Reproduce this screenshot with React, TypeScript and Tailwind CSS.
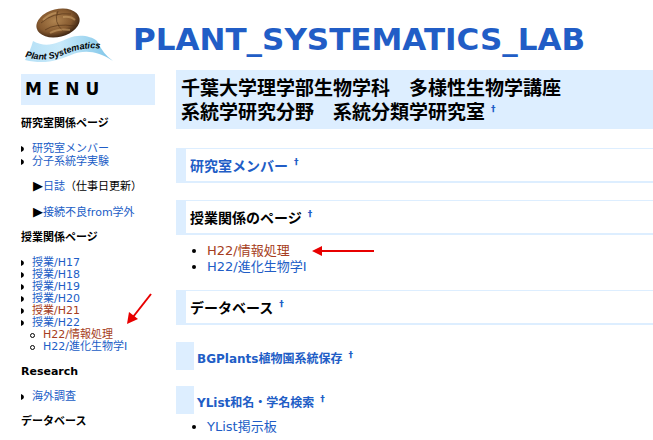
import type { ReactNode } from 'react';

const lessonYears = ['H17', 'H18', 'H19', 'H20', 'H21'];

function Anchor() {
  return (
    <a href="#top" className="ml-1.5 align-super text-[9px] leading-none font-bold text-[#215dc6]">
      †
    </a>
  );
}

function PageLink({ children, visited = false }: { children: ReactNode; visited?: boolean }) {
  return (
    <a href="#page" className={visited ? 'text-[#a63d21]' : 'text-[#215dc6]'}>
      {children}
    </a>
  );
}

function MenuHeading({ children }: { children: ReactNode }) {
  return <h5 className="text-[11px] leading-[14px] font-bold">{children}</h5>;
}

function MenuItem({ children }: { children: ReactNode }) {
  return (
    <li className="flex items-center">
      <svg width="3" height="6" viewBox="0 0 3 6" className="mr-2 shrink-0">
        <path d="M0 0 Q3 1 3 3 Q3 5 0 6Z" />
      </svg>
      <span>{children}</span>
    </li>
  );
}

function SectionHeading({ children }: { children: ReactNode }) {
  return (
    <h3 className="h-[35px] border-t border-b-2 border-l-10 border-[#ddeeff] pt-[5px] pl-1 text-[14px] leading-6 font-bold">
      {children}
      <Anchor />
    </h3>
  );
}

function SubHeading({ children }: { children: ReactNode }) {
  return (
    <h4 className="h-7 border-l-18 border-[#ddeeff] pt-[5px] pl-[3px] text-[12px] leading-6 font-bold">
      <PageLink>{children}</PageLink>
      <Anchor />
    </h4>
  );
}

function Logo() {
  return (
    <svg width="94" height="58" viewBox="0 0 94 58" role="img" aria-label="Plant Systematics">
      <defs>
        <radialGradient id="seed" cx="0.45" cy="0.4" r="0.65">
          <stop offset="0" stopColor="#b08450" />
          <stop offset="0.6" stopColor="#85592f" />
          <stop offset="1" stopColor="#2c180b" />
        </radialGradient>
        <linearGradient id="ribbon" x1="0" x2="1">
          <stop offset="0" stopColor="#b5e0f6" />
          <stop offset="0.4" stopColor="#c9eafa" />
          <stop offset="1" stopColor="#7cc4e8" />
        </linearGradient>
        <path id="wave" d="M4 49 C18 53 30 52 42 47 S66 38 90 42" />
      </defs>
      <ellipse cx="37" cy="15" rx="22" ry="14" transform="rotate(-14 37 15)" fill="url(#seed)" />
      <path d="M20 15 Q32 4 50 6 M37 3 Q32 14 42 23 M24 22 Q34 15 54 18" fill="none" stroke="#4f2e14" strokeWidth="1" opacity="0.6" />
      <path d="M22 12 Q28 6 35 5 M42 9 Q50 8 54 12 M29 25 Q38 20 49 22" fill="none" stroke="#d3aa70" strokeWidth="2" opacity="0.5" />
      <path d="M12 33 C26 41 38 34 48 30 S70 28 76 33 Q82 46 92 53 C76 42 62 42 50 47 S24 57 4 52 Q9 44 12 33Z" fill="url(#ribbon)" />
      <text className="font-['Liberation_Sans'] text-[9px] font-bold italic">
        <textPath href="#wave">Plant Systematics</textPath>
      </text>
    </svg>
  );
}

export default function App() {
  return (
    <div className="relative h-screen overflow-hidden bg-white font-['DejaVu_Sans','Noto_Sans_CJK_JP',sans-serif] text-black">
      <header className="flex h-[70px] items-start pt-2 pl-[21px]">
        <Logo />
        <h1 className="ml-[18px] pt-[13px] text-[31px] leading-9 font-bold whitespace-nowrap text-[#215dc6]">
          PLANT_SYSTEMATICS_LAB
        </h1>
      </header>

      <div className="flex items-start">
        <nav className="mt-1 ml-[21px] w-[134px] shrink-0 text-[11px] leading-3 whitespace-nowrap">
          <h2 className="mb-3 bg-[#ddeeff] pl-1 text-[17px] leading-[31px] font-bold">M E N U</h2>

          <MenuHeading>研究室関係ページ</MenuHeading>
          <ul className="mt-[11px] leading-[13px]">
            <MenuItem><PageLink>研究室メンバー</PageLink></MenuItem>
            <MenuItem><PageLink>分子系統学実験</PageLink></MenuItem>
          </ul>
          <p className="mt-[11px] ml-3 leading-[13px]"><span className="text-[13px]">▶</span><PageLink>日誌</PageLink>（仕事日更新）</p>
          <p className="mt-3 mb-3 ml-3 leading-[13px]"><span className="text-[13px]">▶</span><PageLink>接続不良from学外</PageLink></p>

          <MenuHeading>授業関係ページ</MenuHeading>
          <ul className="my-3">
            {lessonYears.map((year) => (
              <MenuItem key={year}>
                <PageLink visited={year === 'H21'}>授業/{year}</PageLink>
              </MenuItem>
            ))}
            <MenuItem><PageLink>授業/H22</PageLink></MenuItem>
            <li>
              <ul className="ml-[9px]">
                <li className="flex items-center gap-2">
                  <span className="size-[5px] rounded-full border border-black" />
                  <PageLink visited>H22/情報処理</PageLink>
                </li>
                <li className="flex items-center gap-2">
                  <span className="size-[5px] rounded-full border border-black" />
                  <PageLink>H22/進化生物学I</PageLink>
                </li>
              </ul>
            </li>
          </ul>

          <MenuHeading>Research</MenuHeading>
          <ul className="my-3">
            <MenuItem><PageLink>海外調査</PageLink></MenuItem>
          </ul>
          <MenuHeading>データベース</MenuHeading>
          <ul className="mt-3">
            <MenuItem><PageLink>BGPlants植物園系統保存</PageLink></MenuItem>
          </ul>
        </nav>

        <main className="ml-[21px] min-w-0 flex-1 whitespace-nowrap">
          <h2 className="bg-[#ddeeff] px-[5px] pt-1.5 pb-[5px] text-[19px] leading-6 font-bold">
            千葉大学理学部生物学科　多様性生物学講座
            <br />
            系統学研究分野　系統分類学研究室
            <Anchor />
          </h2>

          <div className="mt-[19px]">
            <SectionHeading><PageLink>研究室メンバー</PageLink></SectionHeading>
          </div>
          <div className="mt-[17px]">
            <SectionHeading>授業関係のページ</SectionHeading>
          </div>
          <ul className="mt-2 mb-[15px] list-disc pl-[31px] text-[13px] leading-4">
            <li><PageLink visited>H22/情報処理</PageLink></li>
            <li><PageLink>H22/進化生物学I</PageLink></li>
          </ul>
          <SectionHeading>データベース</SectionHeading>
          <div className="mt-[17px]">
            <SubHeading>BGPlants植物園系統保存</SubHeading>
          </div>
          <div className="mt-4">
            <SubHeading>YList和名・学名検索</SubHeading>
          </div>
          <ul className="mt-[5px] list-disc pl-[31px] text-[13px] leading-4">
            <li><PageLink>YList掲示板</PageLink></li>
          </ul>
        </main>
      </div>

      <svg width="26" height="32" viewBox="0 0 26 32" className="absolute top-[293px] left-[126px]" aria-hidden="true">
        <path d="M25 1 L7 24" stroke="#e80000" strokeWidth="2" />
        <path d="M1 31 L3 19 L12 26Z" fill="#e80000" />
      </svg>
      <svg width="62" height="12" viewBox="0 0 62 12" className="absolute top-[245px] left-[312px]" aria-hidden="true">
        <path d="M9 6 H62" stroke="#e80000" strokeWidth="2" />
        <path d="M0 6 L10 1 V11Z" fill="#e80000" />
      </svg>
    </div>
  );
}
